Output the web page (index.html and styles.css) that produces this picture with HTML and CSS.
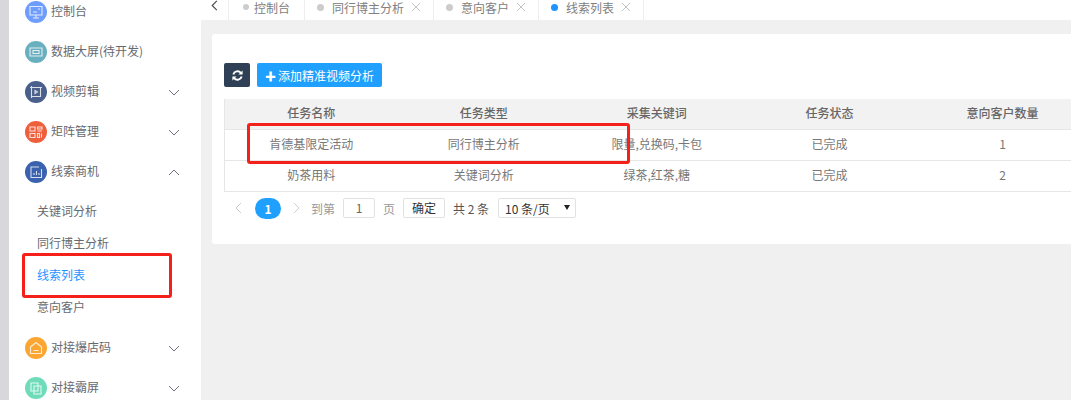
FILE: index.html
```html
<!DOCTYPE html>
<html lang="zh-CN">
<head>
    <meta charset="UTF-8">
    <title>线索列表</title>
    <link rel="stylesheet" href="styles.css">
</head>
<body>
    <div class="layout">
        <aside class="sidebar">
            <ul class="menu">
                <li class="menu-item">
                    <svg class="menu-icon ic-blue" viewBox="0 0 22 22"><path d="M5 5.500h12v8.500H5zM8 17h6M11 14v3M13 8h2M8 11h4"/></svg>
                    <span>控制台</span>
                </li>
                <li class="menu-item">
                    <svg class="menu-icon ic-teal" viewBox="0 0 22 22"><path d="M5 7h12v8H5zM8 9.500h6v3H8z"/></svg>
                    <span>数据大屏(待开发)</span>
                </li>
                <li class="menu-item">
                    <svg class="menu-icon ic-navy" viewBox="0 0 22 22"><path d="M6.500 6.500h9v9h-9zM5 6.500h12M6.500 5v12M10 9.500l2.500 1.500-2.500 1.500z"/></svg>
                    <span>视频剪辑</span>
                    <svg class="arrow" viewBox="0 0 12 7"><path d="M1 1l5 5 5-5"/></svg>
                </li>
                <li class="menu-item">
                    <svg class="menu-icon ic-red" viewBox="0 0 22 22"><path d="M5 6h5v4H5zM5 12.500h5v4H5zM12.500 6H17v2h-4.500zM12.500 10H17M12.500 12.500h2v4h-2zM16.500 12.500v4"/></svg>
                    <span>矩阵管理</span>
                    <svg class="arrow" viewBox="0 0 12 7"><path d="M1 1l5 5 5-5"/></svg>
                </li>
                <li class="menu-item">
                    <svg class="menu-icon ic-indigo" viewBox="0 0 22 22"><path d="M14 6H6v10.500h10.500V8M9 14v-2M11.500 14v-4M14 14v-2"/></svg>
                    <span>线索商机</span>
                    <svg class="arrow" viewBox="0 0 12 7"><path d="M1 6l5-5 5 5"/></svg>
                </li>
                <li>
                    <ul class="sub-menu">
                        <li class="sub-item">关键词分析</li>
                        <li class="sub-item">同行博主分析</li>
                        <li class="sub-item active">线索列表</li>
                        <li class="sub-item">意向客户</li>
                    </ul>
                </li>
                <li class="menu-item">
                    <svg class="menu-icon ic-orange" viewBox="0 0 22 22"><path d="M5.500 10L11 5.500l5.500 4.500v6.500h-11zM8.500 13.500h5"/></svg>
                    <span>对接爆店码</span>
                    <svg class="arrow" viewBox="0 0 12 7"><path d="M1 1l5 5 5-5"/></svg>
                </li>
                <li class="menu-item">
                    <svg class="menu-icon ic-mint" viewBox="0 0 22 22"><path d="M6 6h7v8H6zM9 9h7v8H9z"/></svg>
                    <span>对接霸屏</span>
                    <svg class="arrow" viewBox="0 0 12 7"><path d="M1 1l5 5 5-5"/></svg>
                </li>
            </ul>
        </aside>

        <main class="main">
            <nav class="tabs">
                <div class="tab-back"><svg viewBox="0 0 7 12"><path d="M6 1L1 6l5 5"/></svg></div>
                <div class="tab tab-first"><i class="dot"></i>控制台</div>
                <div class="tab"><i class="dot"></i>同行博主分析<svg class="close" viewBox="0 0 8 8"><path d="M0 0l8 8M8 0L0 8"/></svg></div>
                <div class="tab"><i class="dot"></i>意向客户<svg class="close" viewBox="0 0 8 8"><path d="M0 0l8 8M8 0L0 8"/></svg></div>
                <div class="tab"><i class="dot on"></i>线索列表<svg class="close" viewBox="0 0 8 8"><path d="M0 0l8 8M8 0L0 8"/></svg></div>
            </nav>

            <section class="card">
                <div class="toolbar">
                    <button class="btn-refresh">
                        <svg viewBox="0 0 14 14"><path d="M2.500 6a4.700 4.700 0 0 1 8-2l1 1M11.500 8a4.700 4.700 0 0 1-8 2l-1-1" fill="none" stroke="#fff" stroke-width="2"/><path d="M12.500 1.500V6H8zM1.500 12.500V8H6z" fill="#fff"/></svg>
                    </button>
                    <button class="btn-add"><b>✚</b>添加精准视频分析</button>
                </div>
                <table class="list">
                    <thead>
                        <tr><th>任务名称</th><th>任务类型</th><th>采集关键词</th><th>任务状态</th><th>意向客户数量</th></tr>
                    </thead>
                    <tbody>
                        <tr><td>肯德基限定活动</td><td>同行博主分析</td><td>限量,兑换码,卡包</td><td>已完成</td><td>1</td></tr>
                        <tr><td>奶茶用料</td><td>关键词分析</td><td>绿茶,红茶,糖</td><td>已完成</td><td>2</td></tr>
                    </tbody>
                </table>
                <div class="pager">
                    <svg class="pager-arrow" viewBox="0 0 7 12"><path d="M6 1L1 6l5 5"/></svg>
                    <span class="page-num">1</span>
                    <svg class="pager-arrow" viewBox="0 0 7 12"><path d="M1 1l5 5-5 5"/></svg>
                    <span class="pager-label goto">到第</span>
                    <span class="page-input">1</span>
                    <span class="pager-label">页</span>
                    <span class="page-ok">确定</span>
                    <span class="pager-total">共 2 条</span>
                    <span class="page-size">10 条/页<i></i></span>
                </div>
            </section>
        </main>
    </div>

    <div class="mark mark-side"></div>
    <div class="mark mark-row"></div>
</body>
</html>
```

FILE: styles.css
```css
* {
    box-sizing: border-box;
}

html, body {
    margin: 0;
    height: 400px;
    overflow: hidden;
}

body {
    font-family: "Noto Sans CJK SC", "Liberation Sans", sans-serif;
    font-size: 12px;
    color: #666;
    background-color: #fff;
}

.layout {
    display: flex;
    height: 400px;
    border-left: 9px solid #d8d8dc;
}

/* sidebar */
.sidebar {
    width: 192px;
    flex-shrink: 0;
    background-color: #fff;
    overflow: hidden;
}

.menu, .sub-menu {
    list-style: none;
    margin: 0;
    padding: 0;
}

.menu {
    margin-top: -8px;
}

.sub-menu {
    padding: 3px 0 5px;
}

.menu-item {
    display: flex;
    align-items: center;
    height: 40px;
    padding-left: 16px;
    color: #666a70;
}

.menu-item span {
    margin-top: -4px;
}

.menu-icon {
    width: 22px;
    height: 22px;
    margin-right: 4px;
    border-radius: 50%;
    flex-shrink: 0;
    fill: none;
    stroke: #fff;
    stroke-width: 1.100;
    stroke-opacity: .8;
}

.ic-blue { background-color: #6f9dfb; }
.ic-teal { background-color: #69afbf; }
.ic-navy { background-color: #4a5f8c; }
.ic-red { background-color: #ee5f3c; }
.ic-indigo { background-color: #3a62ae; }
.ic-orange { background-color: #fba632; }
.ic-mint { background-color: #6fdcb9; }

.arrow {
    width: 12px;
    height: 7px;
    margin-left: auto;
    margin-right: 21px;
    fill: none;
    stroke: #6b7280;
    stroke-width: 1;
}

.sub-item {
    height: 32px;
    line-height: 32px;
    padding-left: 28px;
    color: #666a70;
}

.sub-item.active {
    color: #1f93ff;
}

/* tabs */
.main {
    flex: 1;
    min-width: 0;
    display: flex;
    flex-direction: column;
    background-color: #f0f0f0;
}

.tabs {
    display: flex;
    height: 20px;
    flex-shrink: 0;
    background-color: #fff;
    color: #808080;
}

.tab-back {
    width: 27px;
    display: flex;
    align-items: flex-start;
    justify-content: center;
}

.tab-back svg {
    width: 7px;
    height: 11px;
    fill: none;
    stroke: #444;
    stroke-width: 1.200;
}

.tab {
    display: flex;
    align-items: center;
    height: 20px;
    padding: 0 13px 6px 12px;
    border-left: 1px solid #eee;
    white-space: nowrap;
}

.tab:last-child {
    border-right: 1px solid #eee;
}

.tab-first {
    width: 76px;
    padding-left: 14px;
}

.dot {
    width: 7px;
    height: 7px;
    margin-right: 8px;
    border-radius: 50%;
    background-color: #ccc;
}

.tab-first .dot {
    width: 6px;
    height: 6px;
    margin-right: 5px;
}

.dot.on {
    background-color: #1f93ff;
}

.close {
    width: 8px;
    height: 8px;
    margin-left: 8px;
    fill: none;
    stroke: #c4c4c4;
    stroke-width: 1;
}

/* card */
.card {
    margin: 14px 0 0 11px;
    width: 900px;
    height: 210px;
    padding: 29px 12px 0;
    background-color: #fff;
    border-radius: 3px;
}

.toolbar {
    display: flex;
    gap: 7px;
    height: 24px;
    margin-bottom: 12px;
}

.toolbar button {
    border: 0;
    padding: 0;
    border-radius: 2px;
    font-family: inherit;
    color: #fff;
}

.btn-refresh {
    width: 26px;
    display: flex;
    align-items: center;
    justify-content: center;
    background-color: #2f4056;
}

.btn-refresh svg {
    width: 13px;
    height: 13px;
}

.btn-add {
    width: 125px;
    font-size: 12px;
    background-color: #1fa0ff;
}

.btn-add b {
    margin-right: 2px;
    font-size: 11px;
}

.list {
    width: 865px;
    table-layout: fixed;
    border-collapse: collapse;
    border-left: 1px solid #e6e6e6;
}

.list th {
    height: 30px;
    padding: 0 0 2px;
    font-weight: 500;
    color: #666;
    background-color: #f2f2f2;
    border-bottom: 1px solid #e6e6e6;
}

.list td {
    height: 31px;
    padding: 0 0 2px;
    text-align: center;
    color: #777;
    border-bottom: 1px solid #e6e6e6;
}

/* pager */
.pager {
    display: flex;
    align-items: center;
    height: 21px;
    margin-top: 6px;
    padding-left: 11px;
    color: #999;
}

.pager-arrow {
    width: 7px;
    height: 12px;
    fill: none;
    stroke: #ccc;
    stroke-width: 1;
}

.page-num {
    width: 26px;
    height: 21px;
    line-height: 21px;
    margin: 0 12px 0 13px;
    text-align: center;
    font-weight: 700;
    color: #fff;
    background-color: #1fa0ff;
    border-radius: 11px;
}

.pager-label {
    margin: 0 8px;
}

.pager-label.goto {
    margin-left: 11px;
}

.page-input, .page-ok, .page-size {
    height: 20px;
    line-height: 18px;
    border: 1px solid #e2e2e2;
    border-radius: 2px;
    text-align: center;
}

.page-input {
    width: 32px;
    color: #666;
}

.page-ok {
    width: 42px;
    color: #333;
}

.pager-total {
    margin: 0 8px;
    width: 37px;
    white-space: nowrap;
    color: #555;
}

.page-size {
    position: relative;
    width: 78px;
    padding-left: 6px;
    text-align: left;
    line-height: 20px;
    color: #333;
}

.page-size i {
    position: absolute;
    right: 5px;
    top: 6px;
    border-style: solid;
    border-width: 5px 3px 0;
    border-color: #222 transparent transparent;
}

/* hand-drawn red highlight boxes on the screenshot */
.mark {
    position: absolute;
    border: 3px solid #f5201a;
    border-radius: 3px;
}

.mark-side {
    left: 22px;
    top: 253px;
    width: 150px;
    height: 45px;
}

.mark-row {
    left: 247px;
    top: 123px;
    width: 383px;
    height: 41px;
}
```
